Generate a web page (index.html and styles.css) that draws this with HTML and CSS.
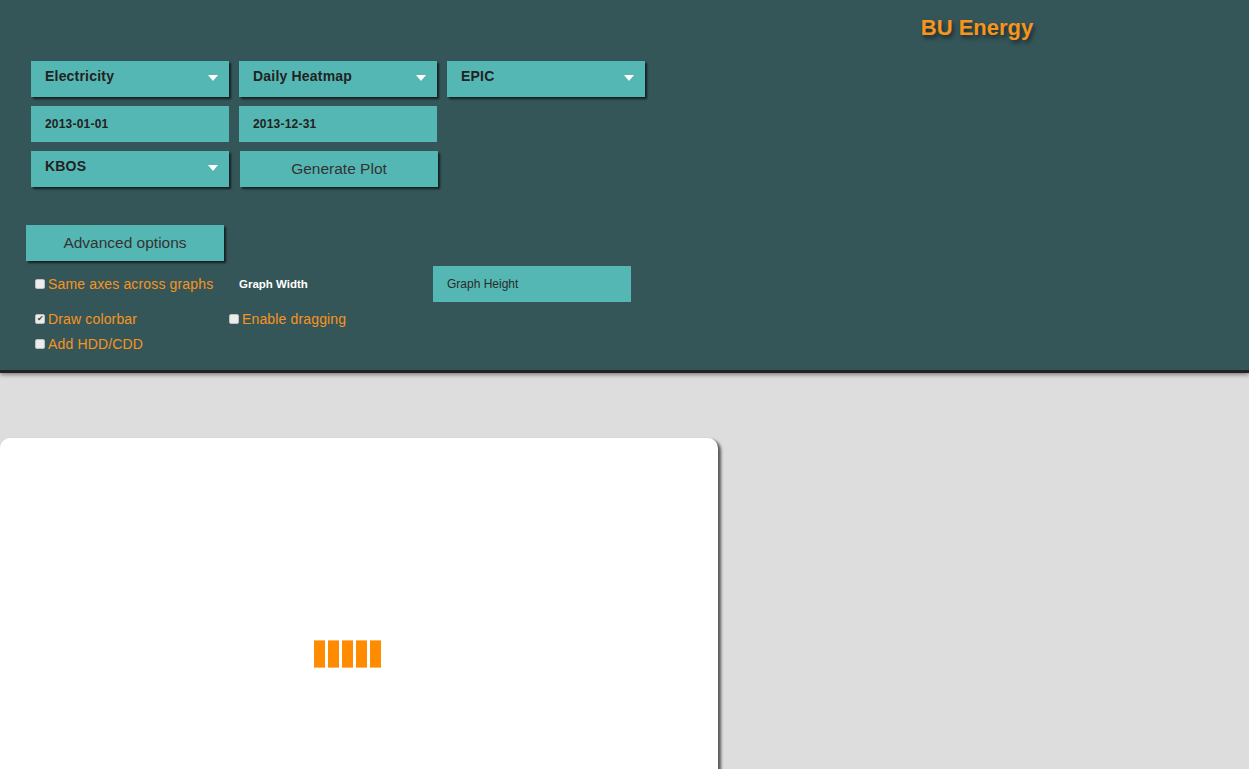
FILE: index.html
```html
<!DOCTYPE html>
<html>
<head>
<meta charset="utf-8">
<link rel="stylesheet" href="styles.css">
</head>
<body>
<header class="header">
  <div class="controls">
    <div class="row">
      <div class="field select shadow">Electricity<span class="arrow"></span></div>
      <div class="field select shadow">Daily Heatmap<span class="arrow"></span></div>
      <div class="field select shadow">EPIC<span class="arrow"></span></div>
    </div>
    <div class="row">
      <div class="field date">2013-01-01</div>
      <div class="field date">2013-12-31</div>
    </div>
    <div class="row">
      <div class="field select shadow">KBOS<span class="arrow"></span></div>
      <div class="field button shadow gen">Generate Plot</div>
    </div>
    <div class="field button shadow adv">Advanced options</div>
    <div class="opts">
      <div class="opt-row r1">
        <label class="chk c1"><span class="box"></span>Same axes across graphs</label>
        <span class="gw">Graph Width</span>
        <div class="field gh">Graph Height</div>
      </div>
      <div class="opt-row r2">
        <label class="chk c2"><span class="box checked">&#10004;</span>Draw colorbar</label>
        <label class="chk"><span class="box"></span>Enable dragging</label>
      </div>
      <div class="opt-row r3">
        <label class="chk"><span class="box"></span>Add HDD/CDD</label>
      </div>
    </div>
  </div>
  <div class="title-col">
    <h1 class="title">BU Energy</h1>
  </div>
</header>
<main class="main">
  <div class="card">
    <div class="loader">
      <span class="bar"></span><span class="bar"></span><span class="bar"></span><span class="bar"></span><span class="bar"></span>
    </div>
  </div>
</main>
</body>
</html>
```
FILE: styles.css
```css
html, body {
  margin: 0;
  padding: 0;
}
body {
  background: #dddddd;
  font-family: "Liberation Sans", Arial, sans-serif;
  overflow: hidden;
  height: 769px;
}
.header {
  background: #355659;
  height: 370px;
  display: grid;
  grid-template-columns: 705px 1fr;
  box-shadow: 0 3px 0 #222, 0 5px 4px rgba(0,0,0,0.4);
  position: relative;
  z-index: 1;
}
.controls {
  padding: 61px 0 0 31px;
}
.row {
  display: flex;
  gap: 10px;
  margin-bottom: 9px;
}
.field {
  width: 198px;
  height: 36px;
  box-sizing: border-box;
  background: #55b7b3;
  color: #222;
  position: relative;
}
.shadow {
  box-shadow: 2px 2px 2px rgba(0,0,0,0.65);
}
.select {
  font-weight: bold;
  font-size: 14px;
  padding: 7px 0 0 14px;
  letter-spacing: 0.2px;
}
.arrow {
  position: absolute;
  right: 11px;
  top: 14px;
  width: 0;
  height: 0;
  border-left: 5px solid transparent;
  border-right: 5px solid transparent;
  border-top: 6px solid #fff;
}
.date {
  font-weight: bold;
  font-size: 12px;
  letter-spacing: 0.2px;
  padding-left: 14px;
  display: flex;
  align-items: center;
}
.button {
  display: flex;
  align-items: center;
  justify-content: center;
  font-size: 15.5px;
  color: #333;
}
.gen {
  margin-left: 1px;
}
.adv {
  margin: 38px 0 0 -5px;
}
.opts {
  margin-top: 5px;
  padding-left: 4px;
}
.opt-row {
  display: flex;
  align-items: center;
}
.r1 {
  height: 36px;
}
.r2 {
  height: 34px;
}
.r3 {
  height: 16px;
}
.chk {
  display: flex;
  align-items: center;
  color: #f7941e;
  font-size: 14px;
  letter-spacing: 0.15px;
}
.c1 {
  width: 204px;
}
.c2 {
  width: 194px;
}
.box {
  width: 10px;
  height: 10px;
  box-sizing: border-box;
  background: #ececec;
  border: 1px solid #c0c0c0;
  border-radius: 2px;
  margin-right: 3px;
  font-size: 8px;
  line-height: 8px;
  color: #444;
  text-align: center;
  overflow: hidden;
  letter-spacing: 0;
}
.gw {
  width: 194px;
  color: #fff;
  font-weight: bold;
  font-size: 11.5px;
}
.gh {
  font-size: 12px;
  padding-left: 14px;
  display: flex;
  align-items: center;
  color: #2a2a2a;
}
.title-col {
  display: flex;
  justify-content: center;
  align-items: flex-start;
}
.title {
  margin: 15px 0 0 0;
  font-size: 22px;
  font-weight: bold;
  color: #f7941e;
  text-shadow: 2px 3px 4px rgba(0,0,0,0.55);
}
.main {
  padding-top: 68px;
}
.card {
  width: 718px;
  height: 340px;
  background: #fff;
  border-radius: 10px 10px 0 0;
  box-shadow: 3px 2px 3px rgba(0,0,0,0.6);
  display: flex;
  justify-content: flex-start;
  padding: 202px 0 0 314px;
  box-sizing: border-box;
}
.loader {
  display: flex;
  gap: 3px;
  height: 28px;
}
.bar {
  width: 11px;
  height: 28px;
  background: #ff8c00;
  box-sizing: border-box;
  border-top: 1px solid #ffb766;
  border-bottom: 1px solid #ffb766;
}
```
